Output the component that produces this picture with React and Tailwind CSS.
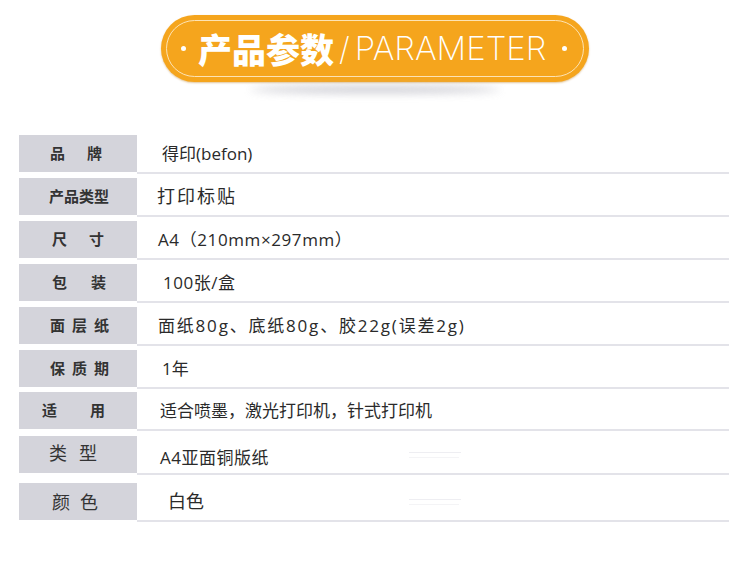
const rows = [
  { label: ['品', '牌'], gap: 'gap-[22px]', lpl: 'pl-[31px] items-center font-semibold', value: '得印(befon)', vpl: 'pl-[25px] items-center', mt: 'mt-0' },
  { label: ['产品类型'], gap: 'gap-0', lpl: 'pl-[30px] items-center font-semibold', value: '打印标贴', vpl: 'pl-[20px] items-center tracking-[2px] text-[18px]', mt: 'mt-[4px]' },
  { label: ['尺', '寸'], gap: 'gap-[22px]', lpl: 'pl-[33px] items-center font-semibold', value: 'A4（210mm×297mm）', vpl: 'pl-[21px] items-center tracking-[0.6px]', mt: 'mt-[4px]' },
  { label: ['包', '装'], gap: 'gap-[24px]', lpl: 'pl-[33px] items-center font-semibold', value: '100张/盒', vpl: 'pl-[26px] items-center tracking-[0.5px]', mt: 'mt-[4px]' },
  { label: ['面', '层', '纸'], gap: 'gap-[7px]', lpl: 'pl-[31px] items-center font-semibold', value: '面纸80g、底纸80g、胶22g(误差2g)', vpl: 'pl-[21px] items-center tracking-[1.8px]', mt: 'mt-[4px]' },
  { label: ['保', '质', '期'], gap: 'gap-[7px]', lpl: 'pl-[31px] items-center font-semibold', value: '1年', vpl: 'pl-[25px] items-center', mt: 'mt-[4px]' },
  { label: ['适', '用'], gap: 'gap-[33px]', lpl: 'pl-[23px] items-center font-semibold', value: '适合喷墨，激光打印机，针式打印机', vpl: 'pl-[23px] items-center', mt: 'mt-[3px]' },
  { label: ['类', '型'], gap: 'gap-[12px]', lpl: 'pl-[30px] items-start pt-[7px] leading-none text-[18px] font-normal', value: 'A4亚面铜版纸', vpl: 'pl-[23px] items-end pb-[3px] tracking-[0.5px]', mt: 'mt-[5px]', ghost: true },
  { label: ['颜', '色'], gap: 'gap-[10px]', lpl: 'pl-[33px] items-center text-[18px] font-normal', value: '白色', vpl: 'pl-[31px] items-center text-[18px]', mt: 'mt-[8px]', ghost: true },
];

function Row({ r }) {
  return (
    <div className={`flex items-start ${r.mt}`}>
      <div className={`w-[118px] h-[37px] bg-[#d4d4db] flex text-[15px] text-[#333] ${r.lpl}`}>
        <div className={`flex ${r.gap}`}>
          {r.label.map((c) => (
            <span key={c}>{c}</span>
          ))}
        </div>
      </div>
      <div className={`relative flex-1 h-[39px] border-b-2 border-[#e3e3e9] flex text-[17px] text-[#2a2a2a] font-['Open_Sans','Noto_Sans_CJK_SC',sans-serif] ${r.vpl}`}>
        {r.value}
        {r.ghost && (
          <div className="absolute left-[272px] top-[16px] flex flex-col gap-[4px]">
            <div className="w-[52px] h-px bg-[#eeeef2]" />
            <div className="w-[50px] h-px bg-[#f4f4f6]" />
          </div>
        )}
      </div>
    </div>
  );
}

export default function App() {
  return (
    <div className="w-[750px] h-[563px] bg-white font-['Noto_Sans_CJK_SC','Noto_Sans',sans-serif]">
      <div className="h-[135px] pt-[15px] flex flex-col items-center">
        <div className="w-[428px] h-[67px] rounded-full bg-[#f5a51d] p-[5px] shadow-[0_1px_2px_rgba(180,110,0,0.4)]">
          <div className="h-full rounded-full border border-[#fde3b4] flex items-center pl-[14px] pr-[16px]">
            <span className="w-[5px] h-[5px] rounded-full bg-white" />
            <span className="ml-[12px] text-white text-[34px] font-black leading-none">产品参数</span>
            <span className="ml-[5px] text-white text-[32px] font-['Inter',sans-serif] font-extralight leading-none">/</span>
            <span className="ml-[5px] text-white text-[33px] font-['Inter',sans-serif] font-extralight leading-none">PARAMETER</span>
            <span className="ml-auto w-[5px] h-[5px] rounded-full bg-white" />
          </div>
        </div>
        <div className="mt-[4px] w-[250px] h-[7px] rounded-[50%] bg-[#b4b4be] blur-[4px] opacity-70" />
      </div>
      <div className="pl-[19px] pr-[21px]">
        {rows.map((r, i) => (
          <Row key={i} r={r} />
        ))}
      </div>
    </div>
  );
}
